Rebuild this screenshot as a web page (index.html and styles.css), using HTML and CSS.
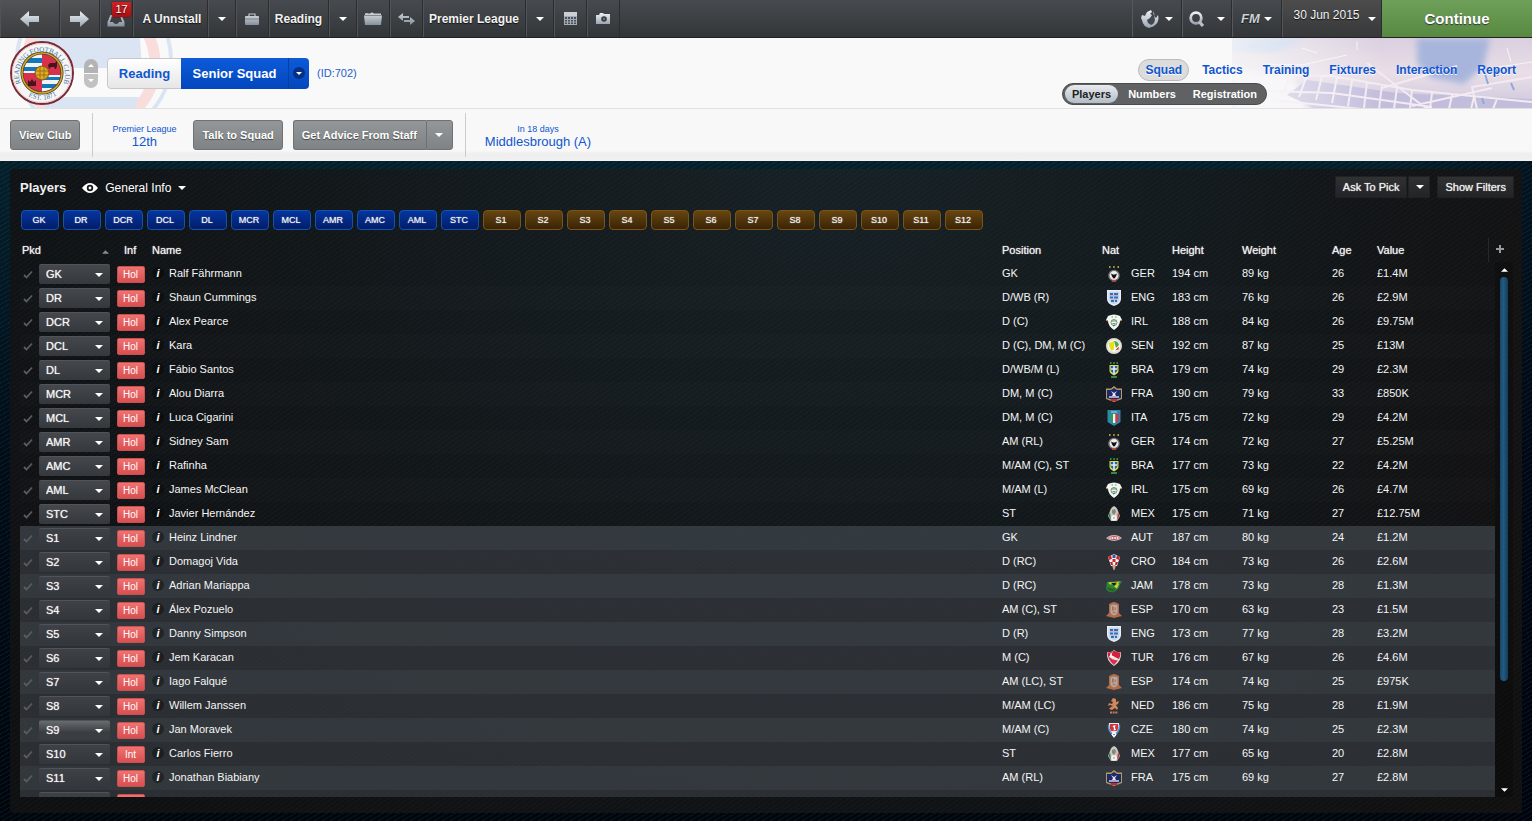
FILE: index.html
```html
<!DOCTYPE html>
<html lang="en">
<head>
<meta charset="utf-8">
<title>Reading – Senior Squad</title>
<link rel="stylesheet" href="styles.css">
</head>
<body>
<svg class="sprite" aria-hidden="true">
  <defs>
    <linearGradient id="metal" x1="0" y1="0" x2="0" y2="1"><stop offset="0" stop-color="#eef1f4"/><stop offset="1" stop-color="#9aa6b2"/></linearGradient>
    <linearGradient id="metal-dim" x1="0" y1="0" x2="0" y2="1"><stop offset="0" stop-color="#c9ced4"/><stop offset="1" stop-color="#84909c"/></linearGradient>
    <symbol id="caret" viewBox="0 0 8 4"><path d="M0 0h8L4 4z" fill="#fff"/></symbol>
    <symbol id="check" viewBox="0 0 10 9"><path d="M1 5l2.500 2.500L9 1.500" fill="none" stroke="#5a5d60" stroke-width="1.800"/></symbol>
    <symbol id="GER" viewBox="0 0 16 16"><path d="M3 1h1.500M7.200 1h1.500M11.500 1H13" stroke="#e8c64a" stroke-width="1.400"/><circle cx="8" cy="9.500" r="5.800" fill="#77777a"/><circle cx="8" cy="9.500" r="4.400" fill="#eee"/><path d="M5 7.500l2 1h2l2-1-1 3-1.500 2h-1L6 10.500z" fill="#111"/><path d="M6 15.300h4" stroke="#c33" stroke-width="1.400"/></symbol>
    <symbol id="ENG" viewBox="0 0 16 16"><path d="M1 0h14v9q0 5-7 7-7-2-7-7z" fill="#e9eff7"/><path d="M2.500 1.500h11V9q0 3.500-5.500 5.500Q2.500 12.500 2.500 9z" fill="#c3d7ee"/><path d="M4 4h3M8 4h4M4 7.500h3M8 7.500h4M5 11h3M9 11h2" stroke="#2d6fb8" stroke-width="2"/><path d="M4 5.700h8M5 9.200h6" stroke="#d98792" stroke-width=".6"/></symbol>
    <symbol id="IRL" viewBox="0 0 16 16"><path d="M2 2q6-3 12 0l2 4-2 1q0 5-6 9-6-4-6-9L0 6z" fill="#f4f6f2"/><path d="M0 6.500l2 .3M16 6.500l-2 .3" stroke="#d2803a"/><path d="M5.500 3h1.500M9 3h1.500M5.500 7h5M6.500 9.500h3" stroke="#5c9a70" stroke-width="1.200"/><path d="M7 12l2-1" stroke="#2c7a45" stroke-width="1.300"/><circle cx="8" cy="8.500" r="3" fill="none" stroke="#557a60" stroke-width=".8"/></symbol>
    <symbol id="SEN" viewBox="0 0 16 16"><circle cx="8" cy="8" r="8" fill="#dfe0d8"/><circle cx="8" cy="8" r="5.800" fill="#fff"/><path d="M3 5l5-2v8l-2 2q-3-2-3-8z" fill="#e8df1c"/><path d="M8 3q4 0 5 4l-3 3z" fill="#53a83c"/><path d="M9 12.500l4-4-.5 3z" fill="#d8302a"/></symbol>
    <symbol id="BRA" viewBox="0 0 16 16"><path d="M4 1h1.500M7.200 1h1.600M10.500 1H12" stroke="#4caf50" stroke-width="1.500"/><path d="M3.500 3h9v6q0 2-4.500 4.500Q3.500 11 3.500 9z" fill="#dbe23e"/><path d="M4.700 4h6.600v5L8 12 4.700 9z" fill="#2a5db0"/><path d="M8 4v8M5 7h6" stroke="#e4eef7" stroke-width="1.600"/><path d="M5 15h6" stroke="#3d9a58" stroke-width="1.700"/></symbol>
    <symbol id="FRA" viewBox="0 0 16 16"><path d="M8 0l3 2.500h5V13l-8 3-8-3V2.500h5z" fill="#b49a62"/><path d="M8 2L11 4h4v8l-7 2.500L1 12V4h4z" fill="#1c2a6a"/><path d="M5 5l3 2 3-2-2 3 1 2H6l1-2z" fill="#dfe6f5"/><path d="M3 11h10" stroke="#fff" stroke-width="1.200"/><path d="M5 14h6" stroke="#d3232c" stroke-width="2"/></symbol>
    <symbol id="ITA" viewBox="0 0 16 16"><path d="M1.500 0h13v12L8 16l-6.500-4z" fill="#2f86ad"/><path d="M4 4h3v9l-3-2z" fill="#2c9a62"/><path d="M7 4h2.500v9H7z" fill="#f1f1ee"/><path d="M9.500 4h3v7l-3 2z" fill="#cf3a40"/><path d="M5 2h6" stroke="#9cc" stroke-width="1.200"/></symbol>
    <symbol id="MEX" viewBox="0 0 16 16"><path d="M8 0q3 1 4 5l2 5-3 5H5l-3-5 2-5q1-4 4-5z" fill="#c8c9c4"/><path d="M4 6L2.500 10 5 14z" fill="#2e7b4e"/><path d="M12 6l1.500 4L11 14z" fill="#bb3238"/><path d="M6 4l3-1 1 3-2 3-2-2z" fill="#8a8577"/><circle cx="8" cy="12" r="2.800" fill="#f5f5f2"/><path d="M7.300 11.500h1.400L8 13z" fill="#333"/></symbol>
    <symbol id="AUT" viewBox="0 0 18 16"><path d="M0 8l3-2q6-2.500 12 0l3 2-3 2q-6 2.500-12 0z" fill="#d8afb1"/><path d="M2 8q7-4 14 0-7 4-14 0z" fill="#b9323a"/><path d="M4 8h10" stroke="#fff" stroke-width="2"/><path d="M5 8h1.500M8 8h1.500M11 8h1.500" stroke="#444" stroke-width="1.400"/></symbol>
    <symbol id="CRO" viewBox="0 0 16 16"><path d="M2 3l6-3 6 3-3 9H5z" fill="#f3f3f5"/><path d="M2 3l3-1.500 1 3-2.500 1.500zM11 1.500L14 3l-1.500 3L10 4.500zM6.500 5h3v3h-3zM4 8l2.500 0 .5 3H5zM9.500 8H12l-1 3H9z" fill="#c9252d"/><path d="M6.500.7h3V4h-3z" fill="#2a57a6"/><path d="M6 11h4l-1.500 5h-1z" fill="#c9aa88"/></symbol>
    <symbol id="JAM" viewBox="0 0 16 16"><path d="M1 4l15-1-4 8-4 3q-5 1-8-3z" fill="#24893c"/><path d="M2 4.500l12-1-1 2-9 1zM14 3.500l-6 5 3 2z" fill="#dcd32e"/><path d="M5 5l6-.5L8 7.500z" fill="#151a14"/><path d="M2 9q5 3 8 1l-2 3.500q-5 0-7-3z" fill="#2f5e1f"/></symbol>
    <symbol id="ESP" viewBox="0 0 16 16"><path d="M3 2l2-1q3-2 6 0l2 1v9l3 3-8 2-8-2 3-3z" fill="#b56a48"/><path d="M4.500 3.500q3.500-2 7 0v6.500q0 2-3.500 3.500Q4.500 12 4.500 10z" fill="#a9acb0"/><path d="M6 4.500h1.700v4H6z" fill="#c2652f"/><path d="M8.500 5.500H10V8H8.500zM6.500 9.500h3v2h-3z" fill="#c07a50"/></symbol>
    <symbol id="TUR" viewBox="0 0 16 16"><path d="M1 2q4 1 7-2 3 3 7 2 1 9-7 14Q0 11 1 2z" fill="#e8dfe2"/><path d="M1.500 2.500q4 .5 6.500-2 3 2.500 6.500 2 0 4-1.500 6.500L5 5l-3 2z" fill="#d21f3c"/><path d="M2 6q4 4 10 4.500L8 15Q3 11 2 6z" fill="#d9304b"/><path d="M7 2.500a2.500 2.500 0 1 0 1.500 4A2 2 0 1 1 7 2.500z" fill="#fff"/></symbol>
    <symbol id="NED" viewBox="0 0 16 16"><path d="M7 0l3 1v3l3-1-1 3-2 1 2 3-1 2-2-2-3 2-3-1 2-2 2-1-3-1-2 1 1-3 3 1 1-2-2-1z" fill="#d0875c"/><path d="M4 14.500h8" stroke="#c27c55" stroke-width="2" stroke-dasharray="2 .6"/></symbol>
    <symbol id="CZE" viewBox="0 0 16 16"><path d="M3 1h10q2 7-5 15Q1 8 3 1z" fill="#e7eaf0"/><path d="M4 2h8q1 4-1 7H5Q3 6 4 2z" fill="#d2333c"/><path d="M6.500 4l3-1-.5 3 1 2-2.500.5L8 6z" fill="#fff"/><path d="M2.500 3Q2 8 6 12M13.500 3Q14 8 10 12" fill="none" stroke="#4a8fcc" stroke-width="1.400"/><circle cx="8" cy="12.500" r="2" fill="#fff"/><path d="M7.200 12h1.600L8 13.500z" fill="#223"/></symbol>
  </defs>
</svg>

<header class="topbar">
  <button class="cell back" aria-label="Back"><svg width="19" height="16" viewBox="0 0 19 16"><path d="M0 8l9-8v5h10v6H9v5z" fill="url(#metal)"/></svg></button>
  <button class="cell square" aria-label="Forward"><svg width="19" height="16" viewBox="0 0 19 16"><path d="M19 8l-9-8v5H0v6h10v5z" fill="url(#metal)"/></svg></button>
  <button class="cell icon inbox" aria-label="Inbox"><svg width="18" height="13" viewBox="0 0 18 13"><path d="M3.500 1h11l3 7v4.500H.5V8z" fill="url(#metal-dim)"/><path d="M4.800 2.500h8.400l2 5.500H12q-.6 2-3 2T6 8H2.800z" fill="#3c4045"/></svg><span class="badge">17</span></button>
  <button class="cell manager">A Unnstall</button>
  <button class="cell drop" aria-label="Manager menu"><svg class="caret"><use href="#caret"/></svg></button>
  <button class="cell icon" aria-label="Club"><svg width="14" height="12" viewBox="0 0 14 12"><path d="M4 3V1h6v2" fill="none" stroke="#c0c6cc" stroke-width="1.200"/><rect y="3" width="14" height="9" rx="1" fill="url(#metal-dim)"/><path d="M0 6h14" stroke="#6a737c" stroke-width=".8"/></svg></button>
  <button class="cell club">Reading</button>
  <button class="cell drop" aria-label="Club menu"><svg class="caret"><use href="#caret"/></svg></button>
  <button class="cell icon" aria-label="Folder"><svg width="18" height="13" viewBox="0 0 18 13"><path d="M1 3V1.500L3 1l1 .5h2L8 .3l2 1.200h7V3z" fill="#c9ced4"/><path d="M0 3.500h18L17 13H1z" fill="url(#metal-dim)"/></svg></button>
  <button class="cell icon" aria-label="Compare"><svg width="17" height="12" viewBox="0 0 17 12"><path d="M0 4l5-4v3h6v2H5v3zM17 8l-5-4v3H6v2h6v3z" fill="url(#metal-dim)"/></svg></button>
  <button class="cell league">Premier League</button>
  <button class="cell drop" aria-label="Competition menu"><svg class="caret"><use href="#caret"/></svg></button>
  <button class="cell icon" aria-label="Calendar"><svg width="13" height="13" viewBox="0 0 13 13"><rect width="13" height="13" fill="#a4adb5"/><rect width="13" height="4" fill="#cbd0d5"/><path d="M1 5h2v2H1zm3 0h2v2H4zm3 0h2v2H7zm3 0h2v2h-2zM1 8h2v1.500H1zm3 0h2v1.500H4zm3 0h2v1.500H7zm3 0h2v1.500h-2zM1 10.500h2V12H1zm3 0h2V12H4zm3 0h2V12H7zm3 0h2V12h-2z" fill="#46505a"/></svg></button>
  <button class="cell icon" aria-label="Screenshot"><svg width="14" height="11" viewBox="0 0 14 11"><path d="M0 2h3l1-2h3l1 1h6v10H0z" fill="url(#metal)"/><circle cx="8" cy="6" r="2.800" fill="#3a3e43"/><circle cx="8" cy="6" r="1" fill="#7b858e"/></svg></button>
  <span class="spacer"></span>
  <button class="cell tool" aria-label="World"><svg width="18" height="18" viewBox="0 0 18 18"><circle cx="9" cy="9" r="8" fill="#43484e"/><path d="M1 5l3 1 2-4 4-2 1 2-2 2 2 1-2 3-3 2 1 3 3 2-1 3Q2 17 1 10L0 8z" fill="url(#metal)"/><path d="M12 1q2 3 1 5l2 2 2-3q2 7-4 11-3 2-5 1l1-2q4 0 5-5" fill="url(#metal)"/></svg><svg class="caret"><use href="#caret"/></svg></button>
  <button class="cell tool search" aria-label="Search"><svg width="16" height="16" viewBox="0 0 16 16"><circle cx="7" cy="7" r="5.300" fill="none" stroke="url(#metal)" stroke-width="2.800"/><path d="M10.500 11l3.500 4" stroke="#b9c1c9" stroke-width="3.200"/></svg><svg class="caret"><use href="#caret"/></svg></button>
  <button class="cell tool fm"><span>FM</span><svg class="caret"><use href="#caret"/></svg></button>
  <button class="cell date"><span>30 Jun 2015</span><svg class="caret"><use href="#caret"/></svg></button>
  <button class="continue">Continue</button>
</header>

<section class="banner">
  <svg class="watermark" viewBox="0 0 180 71" aria-hidden="true">
    <circle cx="94" cy="22" r="77" fill="none" stroke="#dbe4f3" stroke-width="4"/>
    <circle cx="91" cy="26" r="64" fill="#fafafa" stroke="#f9dcdc" stroke-width="11"/>
    <path d="M38 0h102l2 30H33zM40 59h99l-5 12H46z" fill="#dbe4f3"/>
  </svg>
  <svg class="stadium" viewBox="0 0 300 71" preserveAspectRatio="none" aria-hidden="true">
    <defs>
      <linearGradient id="haze" x1="0" x2="1" y1="0" y2="0"><stop offset="0" stop-color="#f9f9f9" stop-opacity=".75"/><stop offset=".25" stop-color="#f9f9f9" stop-opacity=".4"/><stop offset=".5" stop-color="#f9f9f9" stop-opacity="0"/></linearGradient>
      <linearGradient id="sky" x1="0" x2="0" y1="0" y2="1"><stop offset="0" stop-color="#d9cfdf"/><stop offset=".5" stop-color="#eadfe7"/><stop offset="1" stop-color="#cbc6de"/></linearGradient>
      <filter id="soft"><feGaussianBlur stdDeviation="3"/></filter>
    </defs>
    <rect width="300" height="71" fill="url(#sky)"/>
    <path d="M0 0h75L45 14H0z" fill="#b9cdec" filter="url(#soft)"/>
    <path d="M0 30l60 8 20 40H0z" fill="#f6f3f7" filter="url(#soft)"/>
    <path d="M185 0h73l-6 28-20 18-33-6-14-15z" fill="#a7b5dc" filter="url(#soft)"/>
    <path d="M85 71l-30-14 20-15 90 13 135 6v10z" fill="#c3bddc"/>
    <path d="M20 36l80 2 80 14 120 12M10 52l90 3 100 14M40 62l90 9M60 36l-10 20M75 37l-8 22M90 38l-6 24M105 39l-5 26M120 42l-4 26M135 44l-3 26M150 47l-3 24M165 50l-3 21M180 52l-2 19M200 55l-2 16M220 57l-3 14M242 59l-3 12M265 61l-4 10M135 25l60 46M150 50l75-22M245 71l-5-22 60-10M180 68l80-18" fill="none" stroke="#f3eaf2" stroke-width="2"/>
    <path d="M30 26l40 1 45-10M70 10l15 5M125 3v9M260 30l40-6M275 10l4 14" stroke="#fff" fill="none" opacity=".7"/>
    <path d="M253 36l3 10M264 30l2 8M279 45l3 7M250 60l2 6" stroke="#91a9da" stroke-width="2"/>
    <rect width="300" height="71" fill="url(#haze)"/>
  </svg>
  <svg class="crest" viewBox="0 0 64 64" role="img" aria-label="Club crest">
    <defs><path id="crest-top" d="M12 45a23 23 0 1 1 40 0"/><path id="crest-base" d="M15 53a28 28 0 0 0 35-1"/><clipPath id="crest-clip"><circle cx="32" cy="32" r="19"/></clipPath></defs>
    <circle cx="32" cy="32" r="31" fill="#f6f6f6" stroke="#7b2b35" stroke-width="2"/>
    <circle cx="32" cy="32" r="29.500" fill="none" stroke="#e9c9c9"/>
    <g clip-path="url(#crest-clip)"><rect x="12" y="12" width="40" height="40" fill="#f3f3f3"/><path d="M12 17h20v5H12zM12 26h20v4H12zM32 36h20v3H32zM32 43h20v4H32z" fill="#1378b9"/><path d="M32 12h20v22H32zM12 32h20v20H12z" fill="#d8304d"/></g>
    <circle cx="32" cy="32" r="20" fill="none" stroke="#4a3b18" stroke-width="3"/><circle cx="32" cy="32" r="20" fill="none" stroke="#d4a62b" stroke-width="1.500"/>
    <path d="M38 24l2-2h5l2-2v5l-1 3h-1l-1-2h-3l-2 2zM18 39l2 2 2-3 2 3 2-2v6h-8z" fill="#41161c"/>
    <circle cx="32" cy="32" r="7" fill="#e0aa24" stroke="#7a5511"/><path d="M26 30h12M26 34h12M30 25v14M34 25v14" stroke="#8d6414" stroke-width=".8"/>
    <text class="crest-text"><textPath href="#crest-top" startOffset="50%" text-anchor="middle">READING FOOTBALL CLUB</textPath></text>
    <text class="crest-text"><textPath href="#crest-base" startOffset="50%" text-anchor="middle">EST. 1871</textPath></text>
  </svg>
  <div class="stepper">
    <button aria-label="Previous team"><svg class="caret up"><use href="#caret"/></svg></button>
    <button aria-label="Next team"><svg class="caret"><use href="#caret"/></svg></button>
  </div>
  <div class="crumbs">
    <a class="crumb" href="#club">Reading</a>
    <a class="crumb current" href="#squad">Senior Squad</a>
    <button class="crumb-menu" aria-label="Choose squad"><span><svg class="caret"><use href="#caret"/></svg></span></button>
  </div>
  <span class="team-id">(ID:702)</span>
  <div class="navs">
    <nav class="tabs">
      <a class="active" href="#squad">Squad</a><a href="#tactics">Tactics</a><a href="#training">Training</a><a href="#fixtures">Fixtures</a><a href="#interaction">Interaction</a><a href="#report">Report</a>
    </nav>
    <nav class="subtabs">
      <a class="active" href="#players">Players</a><a href="#numbers">Numbers</a><a href="#registration">Registration</a>
    </nav>
  </div>
</section>

<section class="actions">
  <button class="action">View Club</button>
  <a class="fact" href="#league"><small>Premier League</small>12th</a>
  <button class="action">Talk to Squad</button>
  <div class="split"><button class="action">Get Advice From Staff</button><button class="action arrow" aria-label="Staff menu"><svg class="caret"><use href="#caret"/></svg></button></div>
  <a class="fact" href="#match"><small>In 18 days</small>Middlesbrough (A)</a>
</section>

<main class="stage">
  <section class="panel">
    <div class="panel-head">
      <h1>Players</h1>
      <button class="view"><svg width="16" height="10" viewBox="0 0 16 10"><path d="M0 5q8-10 16 0-8 10-16 0z" fill="#fff"/><circle cx="8" cy="5" r="3.200" fill="#14191b"/><circle cx="8" cy="5" r="1.400" fill="#fff"/></svg>General Info<svg class="caret"><use href="#caret"/></svg></button>
      <span class="spacer"></span>
      <div class="pick"><button>Ask To Pick</button><button class="arrow" aria-label="Pick menu"><svg class="caret"><use href="#caret"/></svg></button></div>
      <button class="filters">Show Filters</button>
    </div>
    <div class="chips">
      <button>GK</button><button>DR</button><button>DCR</button><button>DCL</button><button>DL</button><button>MCR</button><button>MCL</button><button>AMR</button><button>AMC</button><button>AML</button><button>STC</button><button class="sub">S1</button><button class="sub">S2</button><button class="sub">S3</button><button class="sub">S4</button><button class="sub">S5</button><button class="sub">S6</button><button class="sub">S7</button><button class="sub">S8</button><button class="sub">S9</button><button class="sub">S10</button><button class="sub">S11</button><button class="sub">S12</button>
    </div>
    <div class="list">
      <div class="viewport">
        <table>
          <colgroup><col class="c-pkd"><col class="c-inf"><col><col class="c-pos"><col class="c-nat"><col class="c-height"><col class="c-weight"><col class="c-age"><col class="c-value"></colgroup>
          <thead><tr><th class="sorted"><span>Pkd</span><svg class="caret up"><use href="#caret"/></svg></th><th class="inf">Inf</th><th>Name</th><th>Position</th><th>Nat</th><th>Height</th><th>Weight</th><th>Age</th><th class="last">Value</th></tr></thead>
          <tbody id="squad-rows"></tbody>
        </table>
      </div>
      <div class="rail">
        <button class="add" aria-label="Add column"></button>
        <div class="track"><button aria-label="Scroll up"><svg class="caret up"><use href="#caret"/></svg></button><div class="groove"><div class="thumb"></div></div><button aria-label="Scroll down"><svg class="caret"><use href="#caret"/></svg></button></div>
      </div>
    </div>
  </section>
</main>
<script src="squad.js"></script>
</body>
</html>
```
FILE: squad.js
```js
// slot, status, name, position, nation, height, weight, age, value
const squad = `GK|Hol|Ralf Fährmann|GK|GER|194|89|26|£1.4M
DR|Hol|Shaun Cummings|D/WB (R)|ENG|183|76|26|£2.9M
DCR|Hol|Alex Pearce|D (C)|IRL|188|84|26|£9.75M
DCL|Hol|Kara|D (C), DM, M (C)|SEN|192|87|25|£13M
DL|Hol|Fábio Santos|D/WB/M (L)|BRA|179|74|29|£2.3M
MCR|Hol|Alou Diarra|DM, M (C)|FRA|190|79|33|£850K
MCL|Hol|Luca Cigarini|DM, M (C)|ITA|175|72|29|£4.2M
AMR|Hol|Sidney Sam|AM (RL)|GER|174|72|27|£5.25M
AMC|Hol|Rafinha|M/AM (C), ST|BRA|177|73|22|£4.2M
AML|Hol|James McClean|M/AM (L)|IRL|175|69|26|£4.7M
STC|Hol|Javier Hernández|ST|MEX|175|71|27|£12.75M
S1|Hol|Heinz Lindner|GK|AUT|187|80|24|£1.2M
S2|Hol|Domagoj Vida|D (RC)|CRO|184|73|26|£2.6M
S3|Hol|Adrian Mariappa|D (RC)|JAM|178|73|28|£1.3M
S4|Hol|Álex Pozuelo|AM (C), ST|ESP|170|63|23|£1.5M
S5|Hol|Danny Simpson|D (R)|ENG|173|77|28|£3.2M
S6|Hol|Jem Karacan|M (C)|TUR|176|67|26|£4.6M
S7|Hol|Iago Falqué|AM (LC), ST|ESP|174|74|25|£975K
S8|Hol|Willem Janssen|M/AM (LC)|NED|186|75|28|£1.9M
S9|Hol|Jan Moravek|M/AM (C)|CZE|180|74|25|£2.3M
S10|Int|Carlos Fierro|ST|MEX|177|65|20|£2.8M
S11|Hol|Jonathan Biabiany|AM (RL)|FRA|175|69|27|£2.8M`.split("\n").map(line => line.split("|"));

const row = ([slot, status, name, position, nation, height, weight, age, value]) => `
<tr class="${/^S\d/.test(slot) ? "bench" : "starter"}${slot === "S9" ? " hovered" : ""}">
  <td><div class="slot"><svg width="10" height="9"><use href="#check"/></svg><label class="pick-slot"><select aria-label="Slot for ${name}"><option>${slot}</option></select><svg class="caret"><use href="#caret"/></svg></label></div></td>
  <td><span class="status">${status}</span></td>
  <td><div class="name"><i>i</i><span>${name}</span></div></td>
  <td>${position}</td>
  <td><div class="nation"><svg width="16" height="16"><use href="#${nation}"/></svg>${nation}</div></td>
  <td>${height} cm</td><td>${weight} kg</td><td>${age}</td><td>${value}</td>
</tr>`;

// The list ends with the still empty twelfth substitute's row.
const emptyRow = `
<tr class="bench">
  <td><div class="slot"><svg width="10" height="9"></svg><label class="pick-slot"><select aria-label="Empty slot"><option></option></select></label></div></td>
  <td><span class="status"></span></td><td colspan="7"></td>
</tr>`;

document.getElementById("squad-rows").innerHTML = squad.map(row).join("") + emptyRow;
```
FILE: styles.css
```css
* { box-sizing: border-box; }
body {
  margin: 0; height: 100vh; display: flex; flex-direction: column; overflow: hidden;
  font-family: "Liberation Sans", Arial, sans-serif; font-size: 11px; color: #f0f0f0; background: #020a10;
}
button, select { font: inherit; color: inherit; border: 0; margin: 0; padding: 0; background: none; }
a { text-decoration: none; color: #0f56cf; }
.sprite { position: absolute; width: 0; height: 0; }
.caret { width: 8px; height: 4px; flex: none; }
.caret.up { transform: rotate(180deg); }
.spacer { flex: 1; }

.topbar { display: flex; flex: none; height: 38px; background: linear-gradient(#474a4e, #333639); border-bottom: 1px solid #222; }
.cell {
  display: flex; align-items: center; justify-content: center; flex: none;
  border-right: 1px solid #2b2d30; box-shadow: inset 1px 0 #505357;
  font-size: 12px; font-weight: bold; color: #f2f2f2; text-shadow: 0 1px 1px #111; white-space: nowrap;
}
.cell.back { width: 60px; background: linear-gradient(#525355, #3b3c3e); }
.cell.square { width: 40px; background: linear-gradient(#525355, #3b3c3e); }
.cell.icon { width: 33px; }
.cell.drop { width: 28px; }
.cell.manager { width: 75px; padding-left: 4px; }
.cell.club { width: 60px; }
.cell.league { width: 103px; }
.cell.tool { width: 50px; gap: 6px; box-shadow: inset 1px 0 #55585c; }
.cell.search { gap: 12px; }
.fm span { font-size: 13px; font-style: italic; font-weight: bold; color: #cbd1d7; }
.cell.fm { gap: 4px; }
.cell.date { width: 100px; gap: 8px; padding-left: 6px; background: linear-gradient(#4c4c4d, #373839); font-weight: normal; }
.date span { padding-bottom: 8px; }
.inbox { position: relative; padding-top: 3px; }
.badge {
  position: absolute; left: 12px; top: 2px; width: 19px; height: 15px; line-height: 15px;
  background: linear-gradient(#d02222, #a80d12); border-radius: 1px; font-size: 11px; font-weight: normal; color: #fff; box-shadow: 0 0 2px #600;
}
.continue { width: 150px; flex: none; background: linear-gradient(#6ea05a, #588941); color: #fff; font-size: 15px; font-weight: bold; text-shadow: 0 1px 1px #333; }

.banner { position: relative; display: flex; flex: none; align-items: center; height: 71px; padding-left: 10px; background: #f9f9f9; border-bottom: 1px solid #e2e2e2; overflow: hidden; }
.watermark { position: absolute; left: 0; top: 0; width: 180px; height: 71px; }
.stadium { position: absolute; right: 0; top: 0; width: 300px; height: 71px; }
.crest, .stepper, .crumbs, .team-id, .navs { position: relative; }
.crest { width: 64px; height: 64px; flex: none; }
.crest-text { font-family: "Liberation Serif", serif; font-size: 7px; fill: #3f6f9f; }
.stepper { display: grid; gap: 1px; margin-left: 10px; }
.stepper button { width: 14px; height: 14px; display: grid; place-items: center; background: #b4b4b4; }
.stepper button:first-child { border-radius: 7px 7px 0 0; }
.stepper button:last-child { border-radius: 0 0 7px 7px; background: #c2c2c2; }
.stepper .caret { width: 6px; height: 3px; }
.crumbs { display: flex; height: 31px; margin-left: 9px; border-radius: 4px; overflow: hidden; font-size: 13px; font-weight: bold; line-height: 31px; }
.crumb { width: 74px; text-align: center; background: linear-gradient(#fff, #e6e6e6); border: 1px solid #c8c8c8; border-right: 0; border-radius: 4px 0 0 4px; line-height: 29px; }
.crumb.current { width: 107px; border: 0; border-radius: 0; line-height: 31px; color: #fff; background: linear-gradient(#0d5bd8, #0246bd); }
.crumb-menu { width: 21px; display: grid; place-items: center; background: linear-gradient(#0d5bd8, #0246bd); border-left: 1px solid #0b3da0; }
.crumb-menu span { width: 12px; height: 12px; border-radius: 6px; background: #062f86; display: grid; place-items: center; }
.crumb-menu .caret { width: 6px; height: 3px; }
.team-id { margin-left: 8px; color: #2160cc; }
.navs { margin-left: auto; display: flex; flex-direction: column; align-items: flex-end; gap: 2px; align-self: flex-end; padding-bottom: 3px; }
.tabs { display: flex; gap: 6px; padding-right: 9px; font-size: 12px; font-weight: bold; line-height: 20px; }
.tabs a { padding: 0 6px; border: 1px solid transparent; border-radius: 11px; text-shadow: 0 1px #fff; }
.tabs .active { background: #dcdcdc; border-color: #bbb; }
.subtabs { display: flex; align-items: center; gap: 3px; height: 22px; margin-right: 265px; padding: 0 2px; border-radius: 11px; border: 1px solid #4a4b4c; background: #606162; font-weight: bold; line-height: 18px; }
.subtabs a { padding: 0 7px; color: #fff; border-radius: 9px; }
.subtabs .active { color: #222; background: linear-gradient(#e9ebee, #b3bcc6); }

.actions { display: flex; flex: none; align-items: center; height: 52px; padding: 0 10px; background: linear-gradient(#f8f8f8 80%, #eee 86%, #f2f2f2); }
.action { height: 30px; padding: 0 8px; border: 1px solid #6f7173; border-radius: 3px; background: linear-gradient(#94979a, #808386); color: #fff; font-weight: bold; text-shadow: 0 1px 1px #444; white-space: nowrap; }
.split { display: flex; margin-left: 10px; }
.split .action:first-child { border-radius: 3px 0 0 3px; border-right: 0; padding-right: 9px; }
.action.arrow { width: 27px; border-radius: 0 3px 3px 0; display: grid; place-items: center; }
.fact { height: 44px; display: flex; flex-direction: column; align-items: center; justify-content: center; margin-left: 12px; border-left: 1px solid #ccc; padding: 2px 17px 0 19px; font-size: 13px; line-height: 14px; white-space: nowrap; }
.fact small { font-size: 9px; line-height: 12px; }

.stage { flex: 1; min-height: 0; display: flex; padding: 8px 10px; background: repeating-linear-gradient(150deg, rgba(40,100,120,.17) 0 1px, transparent 1px 4px), linear-gradient(90deg, transparent 90%, rgba(0,0,15,.4)), linear-gradient(#05202b, #010c17 45%, #01050c); }
.panel { flex: 1; min-width: 0; display: flex; flex-direction: column; padding: 7px 10px 16px; border-radius: 4px; background: repeating-linear-gradient(145deg, rgba(255,255,255,.02) 0 1px, transparent 1px 4px), linear-gradient(90deg, transparent 80%, rgba(20,16,16,.5)), radial-gradient(ellipse at 55% 0, #172125, #12171a 45%, #0f1012 90%); }
.panel-head { display: flex; align-items: center; height: 22px; }
h1 { margin: 0; font-size: 13px; }
.view { display: flex; align-items: center; gap: 7px; margin-left: 16px; padding-top: 2px; font-size: 12px; color: #fff; }
.pick { display: flex; height: 22px; margin-right: 7px; }
.pick button, .filters { height: 22px; padding: 0 7px; background: linear-gradient(#303132, #232425); border: 1px solid #1f2122; text-shadow: 0 0 1px #ddd; white-space: nowrap; }
.pick .arrow { width: 22px; display: grid; place-items: center; margin-left: 1px; }
.panel-head .filters { margin-right: -2px; }
.chips { display: flex; flex-wrap: wrap; gap: 4px; margin: 12px 0 8px 1px; }
.chips button { width: 38px; height: 20px; padding-right: 2px; border: 1px solid #1254ad; border-radius: 4px; background: linear-gradient(#0535a0, #021d69); font-size: 9px; text-shadow: 0 0 1px #ddd; }
.chips .sub { border-color: #7c5316; background: linear-gradient(#664510, #3a2406); }

.list { flex: 1; min-height: 0; display: flex; }
.viewport { flex: 1; min-width: 0; overflow: hidden; }
table { width: 100%; border-collapse: collapse; table-layout: fixed; }
.c-pkd { width: 97px; } .c-inf { width: 35px; } .c-pos { width: 100px; } .c-nat { width: 70px; } .c-height { width: 70px; } .c-weight { width: 90px; } .c-age { width: 45px; } .c-value { width: 118px; }
th { height: 24px; padding: 0; text-align: left; font-weight: normal; text-shadow: 0 0 1px #ddd; }
.sorted { padding: 0 8px 0 2px; }
.sorted span { display: inline-block; width: 80px; }
.sorted .caret { width: 7px; opacity: .5; }
th.inf { padding-left: 7px; }
th.last { background: linear-gradient(#26292b, #26292b) 111px 0 / 1px 100% no-repeat; }
td { height: 24px; padding: 0 0 2px; white-space: nowrap; color: #f5f5f5; }
td:nth-child(1), td:nth-child(2) { padding: 0; }
.starter:nth-child(even) { background: rgba(255,255,255,.01); }
.bench:nth-child(even) { background: rgba(66,72,78,.7); }
.bench:nth-child(odd) { background: rgba(56,60,65,.7); }
.slot { display: flex; align-items: center; padding-left: 3px; gap: 6px; }
.pick-slot { position: relative; width: 71px; height: 20px; }
.pick-slot select { appearance: none; display: block; width: 100%; height: 20px; padding: 0 20px 2px 7px; border-radius: 2px; background: linear-gradient(#44474b, #35383c); border-top: 1px solid #505357; color: #f5f5f5; text-shadow: 0 0 1px #ddd; }
.bench .pick-slot select { background: linear-gradient(#3e4145, #33363a); }
.hovered .pick-slot select { background: linear-gradient(#696c6f, #3a3d41 60%); }
.pick-slot .caret { position: absolute; right: 7px; top: 9px; pointer-events: none; }
.status { display: block; width: 28px; height: 17px; line-height: 16px; text-align: center; border: 1px solid #c94f50; border-radius: 2px; background: linear-gradient(#ee7271, #d94f50); font-size: 10px; color: #fff; margin-top: 1px; padding-right: 1px; }
.name { display: flex; align-items: center; gap: 5px; }
.name i { width: 12px; height: 12px; border-radius: 6px; background: rgba(0,0,0,.35); font: italic bold 11px/12px "Liberation Sans", sans-serif; text-align: center; color: #fff; }
.nation { display: flex; align-items: center; gap: 9px; padding-left: 4px; height: 22px; }
.nation svg { margin-top: 2px; }
.rail { width: 19px; flex: none; display: flex; flex-direction: column; align-items: flex-start; margin-right: -2px; }
.add { width: 10px; height: 24px; flex: none; background: linear-gradient(#999, #999) 50% 10px / 8px 2px no-repeat, linear-gradient(#999, #999) 50% 7px / 2px 8px no-repeat; }
.track { flex: 1; width: 18px; display: flex; flex-direction: column; align-items: center; background: rgba(0,0,0,.2); }
.track button { height: 15px; flex: none; display: grid; place-items: center; }
.track .caret { width: 7px; }
.groove { flex: 1; width: 8px; }
.thumb { height: 80%; border-radius: 4px; background: linear-gradient(90deg, #174568, #235b81 40%, #143c5c); }
```
